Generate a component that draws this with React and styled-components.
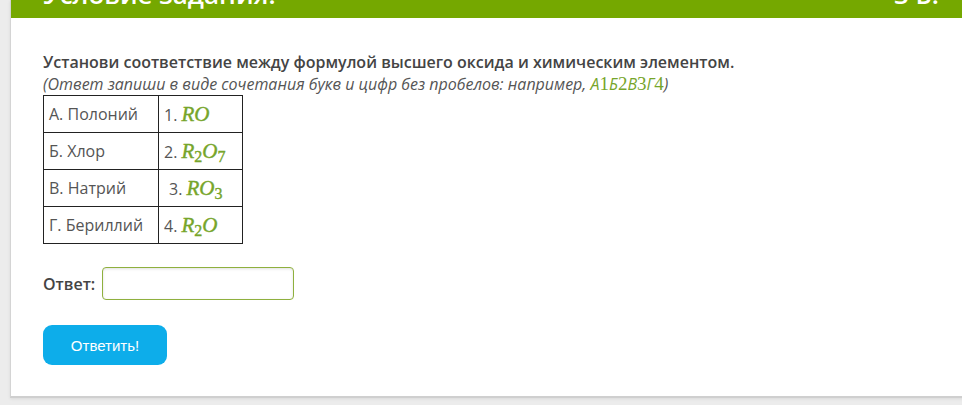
import styled, { createGlobalStyle } from 'styled-components';

const GlobalStyle = createGlobalStyle`
  html, body {
    margin: 0;
    padding: 0;
    background: #ececec;
    overflow: hidden;
  }
  body {
    font-family: 'Open Sans', 'Noto Sans', sans-serif;
    color: #444;
  }
`;

const Page = styled.div`
  padding-left: 10px;
  height: 405px;
`;

const Card = styled.div`
  width: 958px;
  background: #fff;
  border-left: 1px solid #d4d4d4;
  border-bottom: 2px solid #cfcfcf;
  box-shadow: 0 1px 3px rgba(0, 0, 0, 0.08);
`;

const Header = styled.div`
  height: 18px;
  overflow: hidden;
  background: #75a800;
  color: #fff;
  display: flex;
  justify-content: space-between;
  align-items: flex-start;
  padding: 0 30px 0 32px;
`;

const HeaderText = styled.h2`
  margin: -24px 0 0;
  font-size: 26px;
  font-weight: 600;
  line-height: normal;
`;

const Body = styled.div`
  padding: 33px 32px 31px;
`;

const Question = styled.p`
  margin: 0;
  font-size: 16px;
  font-weight: 600;
  line-height: 22px;
  color: #444;
`;

const Hint = styled.p`
  margin: 0;
  font-size: 16px;
  font-style: italic;
  line-height: 22px;
  color: #555;
`;

const Sample = styled.span`
  color: #76a52a;
  font-family: 'Liberation Serif', serif;
  font-style: normal;
  font-size: 19px;
  & i {
    font-family: 'Open Sans', sans-serif;
    font-size: 16px;
  }
`;

const Table = styled.table`
  border-collapse: collapse;
  width: 200px;
`;

const Cell = styled.td`
  border: 1px solid #222;
  height: 36px;
  padding: 0 0 0 ${(p) => (p.indent ? '10px' : '5px')};
  font-size: 16px;
  color: #555;
  width: ${(p) => (p.wide ? '109px' : 'auto')};
  white-space: nowrap;
`;

const Formula = styled.span`
  font-family: 'Liberation Serif', 'DejaVu Serif', serif;
  font-style: italic;
  font-size: 21px;
  color: #76a52a;
  -webkit-text-stroke: 0.4px #76a52a;
  & sub {
    font-style: normal;
    font-size: 16px;
    vertical-align: -4px;
    line-height: 0;
  }
`;

const AnswerRow = styled.div`
  display: flex;
  align-items: center;
  gap: 7px;
  margin-top: 23px;
`;

const Label = styled.label`
  font-size: 16px;
  font-weight: 600;
  color: #444;
`;

const Input = styled.input`
  width: 192px;
  height: 33px;
  box-sizing: border-box;
  border: 1px solid #8fb03e;
  border-radius: 4px;
  box-shadow: inset 0 1px 3px rgba(0, 0, 0, 0.12);
  outline: none;
`;

const Button = styled.button`
  display: block;
  margin-top: 25px;
  width: 124px;
  height: 40px;
  border: none;
  border-radius: 9px;
  background: #0dadea;
  color: #fff;
  font-family: 'Liberation Sans', Arial, sans-serif;
  font-size: 15px;
  cursor: pointer;
`;

const rows = [
  ['А. Полоний', '1.', <>RO</>, false],
  ['Б. Хлор', '2.', <>R<sub>2</sub>O<sub>7</sub></>, false],
  ['В. Натрий', '3.', <>RO<sub>3</sub></>, true],
  ['Г. Бериллий', '4.', <>R<sub>2</sub>O</>, false],
];

export default function App() {
  return (
    <Page>
      <GlobalStyle />
      <Card>
        <Header>
          <HeaderText>Условие задания:</HeaderText>
          <HeaderText>3 Б.</HeaderText>
        </Header>
        <Body>
          <Question>Установи соответствие между формулой высшего оксида и химическим элементом.</Question>
          <Hint>
            (Ответ запиши в виде сочетания букв и цифр без пробелов: например,{' '}
            <Sample><i>А</i>1<i>Б</i>2<i>В</i>3<i>Г</i>4</Sample>)
          </Hint>
          <Table>
            <tbody>
              {rows.map(([el, n, f, indent]) => (
                <tr key={n}>
                  <Cell wide>{el}</Cell>
                  <Cell indent={indent}>
                    {n} <Formula>{f}</Formula>
                  </Cell>
                </tr>
              ))}
            </tbody>
          </Table>
          <AnswerRow>
            <Label>Ответ:</Label>
            <Input type="text" />
          </AnswerRow>
          <Button>Ответить!</Button>
        </Body>
      </Card>
    </Page>
  );
}
